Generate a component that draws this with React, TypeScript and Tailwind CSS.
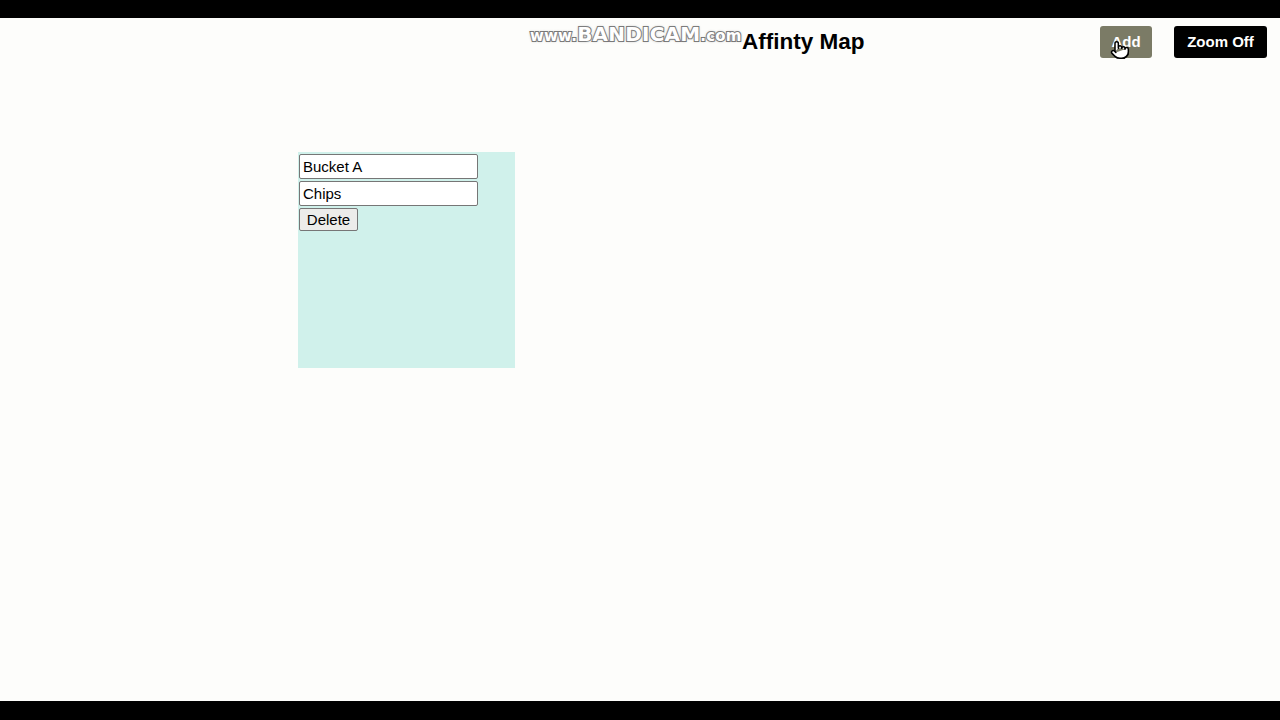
import { Pointer } from "lucide-react";

export default function App() {
  return (
    <div className="flex h-[720px] w-[1280px] flex-col bg-black font-['Liberation_Sans',Arial,sans-serif]">
      <div className="h-[18px] shrink-0 bg-black" />

      <div className="relative flex-1 bg-[#fdfdfb]">
        {/* Header */}
        <header className="flex items-center pt-[8px] pr-[13px] pl-[742px]">
          <h1 className="text-[22.5px] font-bold leading-[32px] text-black">
            Affinty Map
          </h1>
          <div className="ml-auto flex items-center gap-[22px]">
            <button className="relative h-[32px] w-[52px] rounded-[3px] bg-[#7b7b66] text-[15px] font-bold text-white">
              Add
              <Pointer
                className="absolute top-[14px] left-[10px] h-[20px] w-[20px] fill-white text-black"
                strokeWidth={1.8}
              />
            </button>
            <button className="h-[32px] w-[93px] rounded-[3px] bg-black text-[15px] font-bold text-white">
              Zoom Off
            </button>
          </div>
        </header>

        {/* Recorder watermark */}
        <div className="pointer-events-none absolute top-[5px] left-[530px] flex items-end font-['DejaVu_Sans',sans-serif] font-bold tracking-[0.2px] text-white [-webkit-text-stroke:2px_#707070] [paint-order:stroke_fill] [text-shadow:0_0_3px_#999]">
          <span className="text-[15px] leading-[20px]">www.</span>
          <span className="text-[20px] leading-[23px]">BANDICAM</span>
          <span className="text-[15px] leading-[20px]">.com</span>
        </div>

        {/* Bucket card */}
        <div className="absolute top-[134px] left-[298px] flex h-[216px] w-[217px] flex-col items-start gap-[2px] bg-[#d0f1eb] p-[1px] pt-[2px]">
          <input
            defaultValue="Bucket A"
            className="h-[25px] w-[179px] rounded-[2px] border border-[#767676] bg-white px-[3px] text-[15px] text-black outline-none"
          />
          <input
            defaultValue="Chips"
            className="h-[25px] w-[179px] rounded-[2px] border border-[#767676] bg-white px-[3px] text-[15px] text-black outline-none"
          />
          <button className="h-[23px] w-[59px] rounded-[2px] border border-[#767676] bg-[#ececea] text-[15px] text-black">
            Delete
          </button>
        </div>
      </div>

      <div className="h-[19px] shrink-0 bg-black" />
    </div>
  );
}
